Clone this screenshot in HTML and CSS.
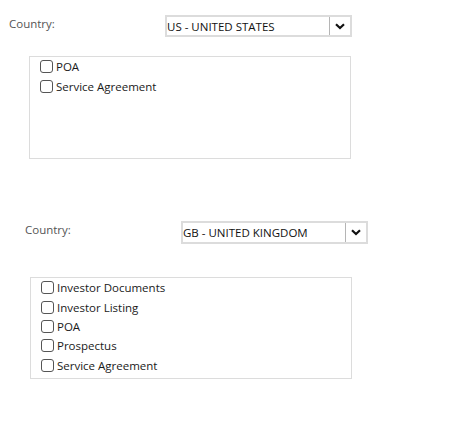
FILE: index.html
```html
<!DOCTYPE html>
<html>
<head>
<meta charset="utf-8">
<link rel="stylesheet" href="styles.css">
</head>
<body>
<div class="block block-us">
  <div class="row">
    <span class="label">Country:</span>
    <div class="select">
      <span class="select-text">US - UNITED STATES</span>
      <span class="select-btn"><svg width="10" height="7" viewBox="0 0 10 7"><path d="M1 1.2 L5 5 L9 1.2" fill="none" stroke="#111" stroke-width="2.2"/></svg></span>
    </div>
  </div>
  <div class="list">
    <label class="item"><span class="box"></span><span>POA</span></label>
    <label class="item"><span class="box"></span><span>Service Agreement</span></label>
  </div>
</div>
<div class="block block-gb">
  <div class="row">
    <span class="label">Country:</span>
    <div class="select">
      <span class="select-text">GB - UNITED KINGDOM</span>
      <span class="select-btn"><svg width="10" height="7" viewBox="0 0 10 7"><path d="M1 1.2 L5 5 L9 1.2" fill="none" stroke="#111" stroke-width="2.2"/></svg></span>
    </div>
  </div>
  <div class="list">
    <label class="item"><span class="box"></span><span>Investor Documents</span></label>
    <label class="item"><span class="box"></span><span>Investor Listing</span></label>
    <label class="item"><span class="box"></span><span>POA</span></label>
    <label class="item"><span class="box"></span><span>Prospectus</span></label>
    <label class="item"><span class="box"></span><span>Service Agreement</span></label>
  </div>
</div>
</body>
</html>
```
FILE: styles.css
```css
html, body {
  margin: 0;
  padding: 0;
  background: #fff;
}
body {
  font-family: "Open Sans", "Noto Sans", sans-serif;
  font-size: 11.5px;
  color: #1a1a1a;
  width: 468px;
  height: 432px;
}
.block {
  display: flex;
  flex-direction: column;
}
.block-us {
  padding-top: 15px;
}
.block-gb {
  padding-top: 62px;
}
.row {
  display: flex;
  align-items: flex-start;
}
.label {
  color: #555;
  width: 156px;
  line-height: 14px;
  margin-top: 2px;
}
.block-us .label { margin-left: 9px; }
.block-gb .label { margin-left: 25px; }
.select {
  display: flex;
  align-items: stretch;
  width: 183px;
  height: 18px;
  border: 2px solid #dcdcdc;
  background: #fff;
}
.block-gb .select { height: 19px; }
.select-text {
  flex: 1;
  padding-left: 0;
  line-height: 20px;
  color: #111;
}
.select-btn {
  width: 20px;
  border-left: 1px solid #b5b5b5;
  display: flex;
  align-items: center;
  justify-content: center;
}
.list {
  width: 320px;
  border: 1px solid #dcdcdc;
  padding: 0 0 0 10px;
  box-sizing: border-box;
  display: flex;
  flex-direction: column;
}
.block-us .list {
  margin-left: 29px;
  margin-top: 19px;
  width: 322px;
  height: 103px;
}
.block-gb .list {
  margin-left: 30px;
  margin-top: 33px;
  width: 322px;
  height: 102px;
}
.item {
  display: flex;
  align-items: center;
  height: 19.4px;
}
.box {
  width: 11px;
  height: 11px;
  border: 1px solid #555;
  border-radius: 3px;
  background: #fff;
  margin-right: 3px;
}
```
